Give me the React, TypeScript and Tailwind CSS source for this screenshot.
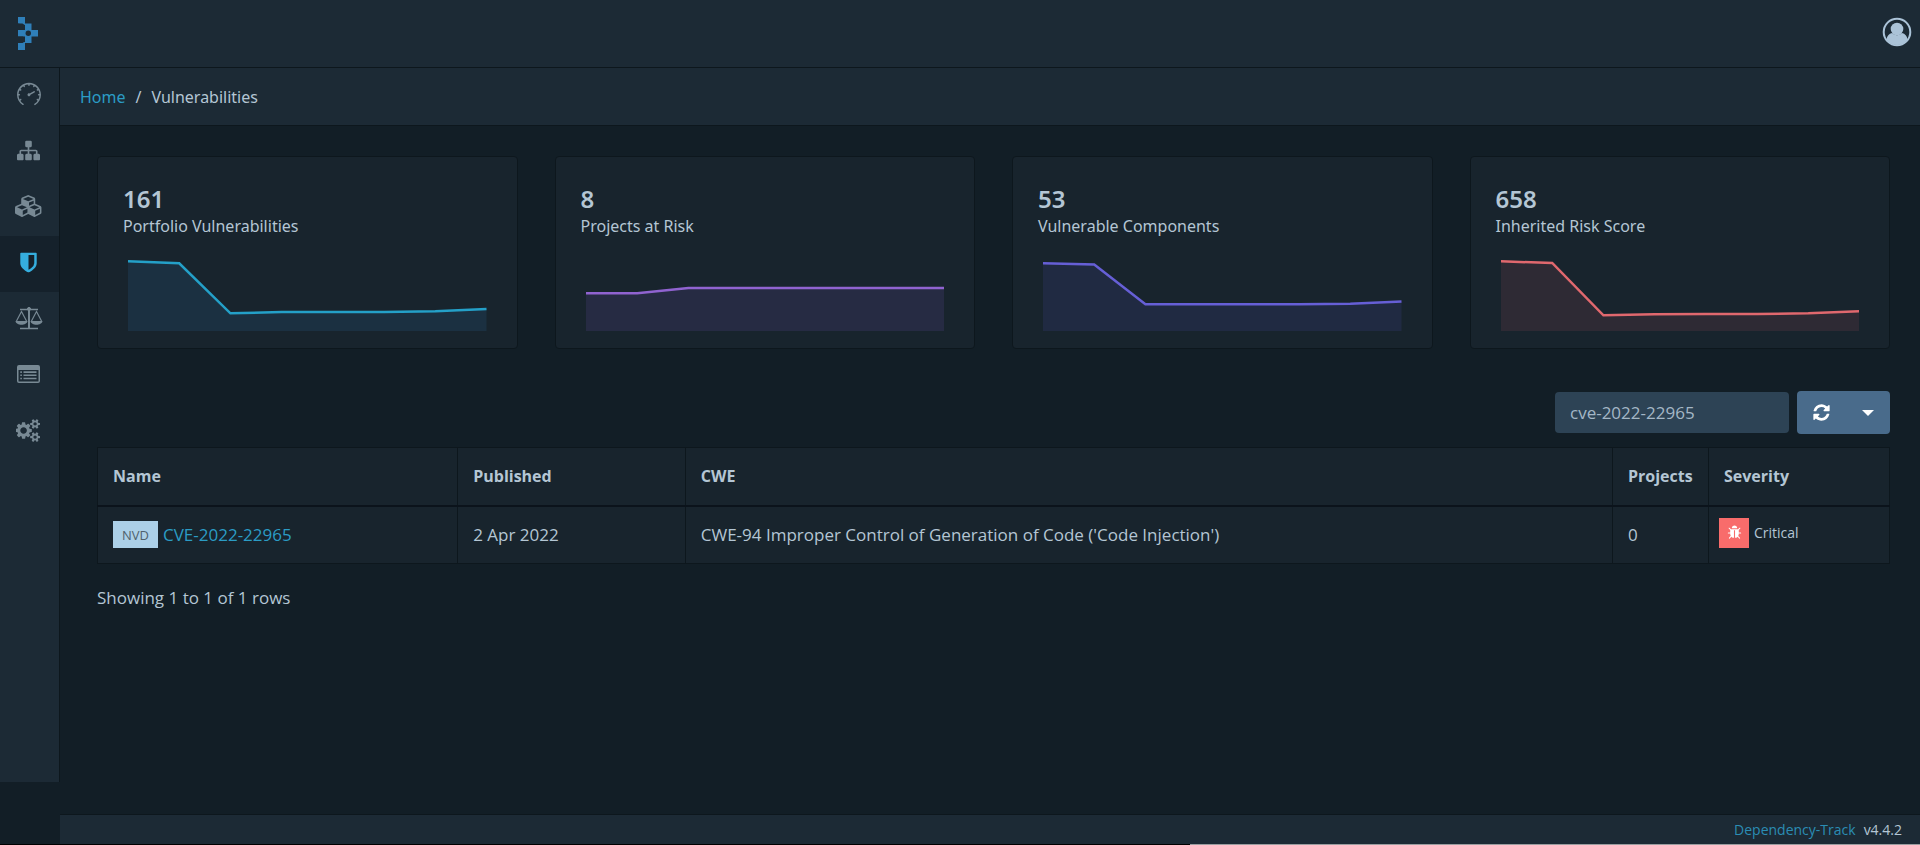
import { useState } from "react";
import type { ReactNode } from "react";
import { SlSpeedometer } from "react-icons/sl";

const icons = {
  sitemap:
    "M1792 1248v320q0 40-28 68t-68 28h-320q-40 0-68-28t-28-68v-320q0-40 28-68t68-28h96v-192h-512v192h96q40 0 68 28t28 68v320q0 40-28 68t-68 28h-320q-40 0-68-28t-28-68v-320q0-40 28-68t68-28h96v-192h-512v192h96q40 0 68 28t28 68v320q0 40-28 68t-68 28h-320q-40 0-68-28t-28-68v-320q0-40 28-68t68-28h96v-192q0-52 38-90t90-38h512v-192h-96q-40 0-68-28t-28-68v-320q0-40 28-68t68-28h320q40 0 68 28t28 68v320q0 40-28 68t-68 28h-96v192h512q52 0 90 38t38 90v192h96q40 0 68 28t28 68z",
  cubes:
    "M640 1632l384-192v-314l-384 164v342zm-64-454l404-173-404-173-404 173zm1088 454l384-192v-314l-384 164v342zm-64-454l404-173-404-173-404 173zm-448-293l384-165v-266l-384 164v267zm-64-379l441-189-441-189-441 189zm1088 518v416q0 36-19 67t-52 47l-448 224q-25 14-57 14t-57-14l-448-224q-4-2-7-4-2 2-7 4l-448 224q-25 14-57 14t-57-14l-448-224q-33-16-52-47t-19-67v-416q0-38 21.500-70t56.500-48l434-186v-400q0-38 21.500-70t56.500-48l448-192q23-10 50-10t50 10l448 192q35 16 56.500 48t21.500 70v400l434 186q36 16 57 48t21 70z",
  shield:
    "M1344 960v-640h-448v1137q119-63 213-137 235-184 235-360zm192-768v768q0 86-33.500 170.500t-83 150-118 127.500-126.500 103-121 77.500-89.500 49.500-42.500 20q-12 6-26 6t-26-6q-16-7-42.500-20t-89.500-49.500-121-77.500-126.500-103-118-127.500-83-150-33.500-170.500v-768q0-26 19-45t45-19h1152q26 0 45 19t19 45z",
  cogs:
    "M832 896q0-106-75-181t-181-75-181 75-75 181 75 181 181 75 181-75 75-181zm768 512q0-52-38-90t-90-38-90 38-38 90q0 53 37.500 90.500t90.500 37.500 90.500-37.500 37.500-90.500zm0-1024q0-52-38-90t-90-38-90 38-38 90q0 53 37.500 90.500t90.500 37.500 90.500-37.500 37.500-90.500zm-384 421v185q0 10-7 19.500t-16 10.500l-155 24q-11 35-32 76 34 48 90 115 7 11 7 20 0 12-7 19-23 30-82.500 89.500t-78.500 59.500q-11 0-21-7l-115-90q-37 19-77 31-11 108-23 155-7 24-30 24h-186q-11 0-20-7.500t-10-17.500l-23-153q-34-10-75-31l-118 89q-7 7-20 7-11 0-21-8-144-133-144-160 0-9 7-19 10-14 41-53t47-61q-23-44-35-82l-152-24q-10-1-17-9.500t-7-19.500v-185q0-10 7-19.500t16-10.500l155-24q11-35 32-76-34-48-90-115-7-11-7-20 0-12 7-20 22-30 82-89t79-59q11 0 21 7l115 90q34-18 77-32 11-108 23-154 7-24 30-24h186q11 0 20 7.500t10 17.500l23 153q34 10 75 31l118-89q8-7 20-7 11 0 21 8 144 133 144 160 0 8-7 19-12 16-42 54t-45 60q23 48 34 82l152 23q10 2 17 10.500t7 19.500zm640 533v140q0 16-149 31-12 27-30 52 51 113 51 138 0 4-4 7-122 71-124 71-8 0-46-47t-52-68q-20 2-30 2t-30-2q-14 21-52 68t-46 47q-2 0-124-71-4-3-4-7 0-25 51-138-18-25-30-52-149-15-149-31v-140q0-16 149-31 13-29 30-52-51-113-51-138 0-4 4-7 4-2 35-20t59-34 30-16q8 0 46 46.500t52 67.500q20-2 30-2t30 2q51-71 92-112l6-2q4 0 124 70 4 3 4 7 0 25-51 138 17 23 30 52 149 15 149 31zm0-1024v140q0 16-149 31-12 27-30 52 51 113 51 138 0 4-4 7-122 71-124 71-8 0-46-47t-52-68q-20 2-30 2t-30-2q-14 21-52 68t-46 47q-2 0-124-71-4-3-4-7 0-25 51-138-18-25-30-52-149-15-149-31v-140q0-16 149-31 13-29 30-52-51-113-51-138 0-4 4-7 4-2 35-20t59-34 30-16q8 0 46 46.500t52 67.500q20-2 30-2t30 2q51-71 92-112l6-2q4 0 124 70 4 3 4 7 0 25-51 138 17 23 30 52 149 15 149 31z",
  refresh:
    "M1639 1056q0 5-1 7-64 268-268 434.500t-478 166.500q-146 0-282.500-55t-243.500-157l-129 129q-19 19-45 19t-45-19-19-45v-448q0-26 19-45t45-19h448q26 0 45 19t19 45-19 45l-137 137q71 66 161 102t187 36q134 0 250-65t186-179q11-17 53-117 8-23 30-23h192q13 0 22.500 9.500t9.500 22.500zm25-800v448q0 26-19 45t-45 19h-448q-26 0-45-19t-19-45 19-45l138-138q-148-137-349-137-134 0-250 65t-186 179q-11 17-53 117-8 23-30 23h-199q-13 0-22.500-9.500t-9.500-22.500v-7q65-268 270-434.500t480-166.500q146 0 284 55.500t245 156.500l130-129q19-19 45-19t45 19 19 45z",
  bug:
    "M1696 960q0 26-19 45t-45 19h-224q0 171-67 290l208 209q19 19 19 45t-19 45q-18 19-45 19t-45-19l-198-197q-5 5-15 13t-42 28.500-65 36.500-82 29-97 13v-896h-128v896q-51 0-101.500-13.500t-87-33-66-39-43.500-32.500l-15-14-183 207q-20 21-48 21-24 0-43-16-19-18-20.500-44.500t15.500-46.500l202-227q-58-114-58-274h-224q-26 0-45-19t-19-45 19-45 45-19h224v-294l-173-173q-19-19-19-45t19-45 45-19 45 19l173 173h844l173-173q19-19 45-19t45 19 19 45-19 45l-173 173v294h224q26 0 45 19t19 45zm-480-576h-640q0-133 93.500-226.500t226.500-93.500 226.500 93.500 93.500 226.500z",
};

function Icon({ path, width = 1792, className }: { path: string; width?: number; className: string }) {
  return (
    <svg viewBox={`0 0 ${width} 1792`} fill="currentColor" className={className} aria-hidden="true">
      <path d={path} />
    </svg>
  );
}

function Logo() {
  return (
    <svg viewBox="0 0 20 33" fill="#2f7fb9" className="h-[33px] w-5" aria-hidden="true">
      <path d="M0 0h7v6.500h6.500V13H20v6.500h-6.500V26H7v7H0v-7l7-1v-5.500H0V13h7V8L0 6.500z" />
      <path d="M0 6.500h4.500l2.500 2V11l-2 2H0zM0 19.500h5l2 2v2.500L4.500 26H0z" fill="#1c2a35" />
      <circle cx="10.300" cy="16.300" r="2.700" fill="#1c2a35" />
    </svg>
  );
}

function ScalesIcon() {
  return (
    <svg viewBox="0 0 28 24" fill="none" stroke="currentColor" className="h-6 w-7" aria-hidden="true">
      <path d="M5 3.500h18M5 22.500h18" strokeWidth="1.500" />
      <path d="M14 3v19" strokeWidth="2" />
      <circle cx="14" cy="3" r="1.600" fill="currentColor" />
      <path d="M1.500 15 6.500 5.500 11.500 15M16.500 15l5-9.500 5 9.500" strokeWidth="1.200" />
      <path d="M.5 15h12c-.6 5-11.400 5-12 0zM15.500 15h12c-.6 5-11.400 5-12 0z" fill="currentColor" stroke="none" />
    </svg>
  );
}

function ListIcon() {
  return (
    <svg viewBox="0 0 23 18" fill="currentColor" className="h-[18px] w-[23px]" aria-hidden="true">
      <path
        fillRule="evenodd"
        d="M2 0h19a2 2 0 0 1 2 2v14a2 2 0 0 1-2 2H2a2 2 0 0 1-2-2V2a2 2 0 0 1 2-2zm-.5 5v11q0 .5.500.5h19q.5 0 .5-.5V5z"
      />
      <path d="M3.300 6.300h1.600v1.600H3.300zM3.300 9.500h1.600v1.600H3.300zM3.300 12.700h1.600v1.600H3.300zM6.500 6.300h13v1.600h-13zM6.500 9.500h13v1.600h-13zM6.500 12.700h13v1.600h-13z" />
    </svg>
  );
}

const navItems: { label: string; icon: ReactNode; active?: boolean }[] = [
  { label: "Dashboard", icon: <SlSpeedometer className="h-6 w-6" /> },
  { label: "Projects", icon: <Icon path={icons.sitemap} className="h-[23px] w-[23px]" /> },
  { label: "Components", icon: <Icon path={icons.cubes} width={2304} className="h-[22px] w-7" /> },
  { label: "Vulnerabilities", icon: <Icon path={icons.shield} className="h-[23px] w-[23px]" />, active: true },
  { label: "Licenses", icon: <ScalesIcon /> },
  { label: "Policy Management", icon: <ListIcon /> },
  { label: "Administration", icon: <Icon path={icons.cogs} width={1920} className="h-[23px] w-[25px]" /> },
];

// chart values are y offsets in a 72 unit high plot
const stats = [
  { value: "161", label: "Portfolio Vulnerabilities", color: "#24a0c8", fill: "#1b3041", points: [2.3, 4.3, 54.3, 53, 53, 53, 52.3, 50] },
  { value: "8", label: "Projects at Risk", color: "#9063d0", fill: "#262b43", points: [34.3, 34.3, 29, 29, 29, 29, 29, 29] },
  { value: "53", label: "Vulnerable Components", color: "#665fd6", fill: "#202a42", points: [4.3, 5.6, 45.3, 45.3, 45.3, 45.3, 44.7, 42.5] },
  { value: "658", label: "Inherited Risk Score", color: "#e0686e", fill: "#2e2a34", points: [2.3, 4, 56.3, 55.3, 55, 55, 54.3, 52.3] },
];

function Sparkline({ points, color, fill }: { points: number[]; color: string; fill: string }) {
  const line = points.map((y, i) => `${i * 51},${y}`).join(" ");
  return (
    <svg viewBox="0 0 357 72" preserveAspectRatio="none" className="block h-[72px] w-full" aria-hidden="true">
      <polygon points={`0,72 ${line} 357,72`} fill={fill} />
      <polyline points={line} fill="none" stroke={color} strokeWidth="2.5" vectorEffect="non-scaling-stroke" />
    </svg>
  );
}

export default function App() {
  const [search, setSearch] = useState("cve-2022-22965");

  return (
    <div className="flex min-h-screen flex-col bg-[#121e26] font-['Open_Sans','Noto_Sans',sans-serif] text-[17px] leading-6 text-[#b4c6d4]">
      <header className="flex h-17 items-center justify-between border-b border-[#0d171d] bg-[#1c2a35] pr-2 pl-[18px]">
        <a href="#" aria-label="Dependency-Track home">
          <Logo />
        </a>
        <button type="button" aria-label="Account" className="pb-[3px]">
          <svg viewBox="0 0 30 30" className="block h-[30px] w-[30px]" aria-hidden="true">
            <circle cx="15" cy="15" r="13.300" fill="none" stroke="#abc3d8" strokeWidth="2" />
            <circle cx="15" cy="12" r="6.300" fill="#abc3d8" />
            <path d="M4.500 22.500q.8-5.500 5.500-6.500 5 4.500 10 0 4.700 1 5.500 6.500-4 5.500-10.500 5.500t-10.500-5.500z" fill="#abc3d8" />
          </svg>
        </button>
      </header>

      <div className="flex flex-1">
        <nav className="mb-[62px] w-15 shrink-0 border-r border-[#0d171d] bg-[#1c2a35]">
          {navItems.map((item) => (
            <a
              key={item.label}
              href="#"
              aria-label={item.label}
              className={`flex h-14 items-center justify-center pr-[2px] pb-1 ${
                item.active ? "bg-[#15212b] text-[#35aede]" : "text-[#788994]"
              }`}
            >
              {item.icon}
            </a>
          ))}
        </nav>

        <div className="flex min-w-0 flex-1 flex-col">
          <nav className="flex h-[58px] items-center gap-[10px] border-b border-[#0d171d] bg-[#1c2a35] px-5 font-['Noto_Sans',sans-serif] text-base" aria-label="Breadcrumb">
            <a href="#" className="text-[#2b9cc5]">Home</a>
            <span>/</span>
            <span>Vulnerabilities</span>
          </nav>

          <main className="flex-1 pt-[30px] pr-[30px] pl-[37px]">
            <div className="grid grid-cols-4 gap-[37px]">
              {stats.map((s) => (
                <section key={s.label} className="rounded border border-[#0d171d] bg-[#18242d] px-[25px] pt-7 pb-[17px] font-['Noto_Sans',sans-serif] text-base">
                  <div className="text-2xl leading-7 font-semibold">{s.value}</div>
                  <div className="leading-[26px]">{s.label}</div>
                  <div className="mt-5 px-[5px]">
                    <Sparkline points={s.points} color={s.color} fill={s.fill} />
                  </div>
                </section>
              ))}
            </div>

            <div className="mt-[42px] flex items-center justify-end gap-2">
              <input
                type="text"
                aria-label="Search"
                value={search}
                onChange={(e) => setSearch(e.target.value)}
                className="h-[41px] w-[234px] rounded bg-[#2d4355] px-[15px] text-[#a4b7c6] outline-none"
              />
              <div className="flex h-[43px] overflow-hidden rounded bg-[#496b8b] text-white">
                <button type="button" aria-label="Refresh" className="flex w-12 items-center justify-center">
                  <Icon path={icons.refresh} className="h-[19px] w-[19px]" />
                </button>
                <button type="button" aria-label="Options" className="flex w-[45px] items-center justify-center">
                  <svg viewBox="0 0 12 6" fill="currentColor" className="h-[6px] w-3" aria-hidden="true">
                    <path d="M0 0h12L6 6z" />
                  </svg>
                </button>
              </div>
            </div>

            <table className="mt-[13px] w-full table-fixed border-collapse border border-[#0d171d] bg-[#18242d] text-left">
              <colgroup>
                <col className="w-[20.1%]" />
                <col className="w-[12.7%]" />
                <col />
                <col className="w-24" />
                <col className="w-[181px]" />
              </colgroup>
              <thead>
                <tr className="h-[58px] border-b-2 border-[#0b131b]">
                  {["Name", "Published", "CWE", "Projects", "Severity"].map((h) => (
                    <th key={h} className="border-r border-[#0d171d] px-[15px] text-base font-bold">{h}</th>
                  ))}
                </tr>
              </thead>
              <tbody>
                <tr className="h-[58px]">
                  <td className="border-r border-[#0d171d] px-[15px]">
                    <div className="flex items-center gap-[5px]">
                      <span className="flex h-[27px] w-[45px] items-center justify-center bg-[#acd0e8] text-[13px] text-[#50616d]">NVD</span>
                      <a href="#" className="text-[#2b9cc5]">CVE-2022-22965</a>
                    </div>
                  </td>
                  <td className="border-r border-[#0d171d] px-[15px]">2 Apr 2022</td>
                  <td className="border-r border-[#0d171d] px-[15px]">
                    CWE-94 Improper Control of Generation of Code ('Code Injection')
                  </td>
                  <td className="border-r border-[#0d171d] px-[15px]">0</td>
                  <td className="px-[10px] pb-1">
                    <div className="flex items-center gap-[5px] text-sm">
                      <span className="flex h-[30px] w-[30px] items-center justify-center bg-[#f86c6b] text-white">
                        <Icon path={icons.bug} className="h-[15px] w-[15px]" />
                      </span>
                      Critical
                    </div>
                  </td>
                </tr>
              </tbody>
            </table>
            <p className="mt-[22px]">Showing 1 to 1 of 1 rows</p>
          </main>

          <footer className="flex h-[30px] items-center justify-end gap-2 border-t border-[#0d171d] bg-[#1c2a35] pr-[18px] text-sm">
            <a href="#" className="text-[#2b8db4]">Dependency-Track</a>
            <span>v4.4.2</span>
          </footer>
        </div>
      </div>
      <div className="flex h-px bg-black">
        <div className="ml-auto w-[38%] bg-[#9a9da0]" />
      </div>
    </div>
  );
}
